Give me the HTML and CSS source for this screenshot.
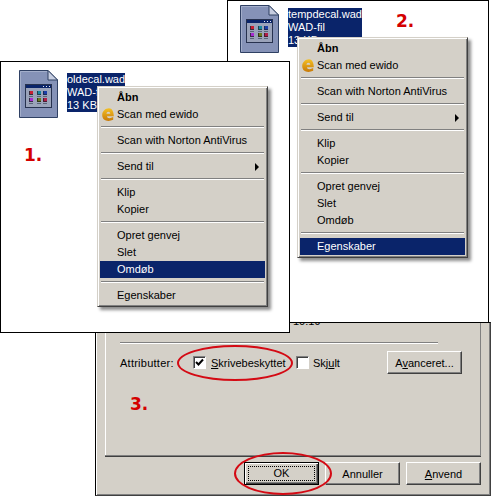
FILE: index.html
```html
<!DOCTYPE html>
<html lang="da">
<head>
    <meta charset="UTF-8">
    <title>Skrivebeskyttet</title>
    <link rel="stylesheet" href="styles.css">
</head>
<body>
    <svg class="defs" width="0" height="0">
        <defs>
            <linearGradient id="ewido-fill" x1="0" y1="0" x2="0" y2="1">
                <stop offset="0" stop-color="#f4c024"/>
                <stop offset="1" stop-color="#c87a08"/>
            </linearGradient>
        </defs>
        <symbol id="wad-icon" viewBox="0 0 39 48">
            <path d="M.5.5H29L38.500 10V47.500H.5Z" fill="#8592b7" stroke="#2f4063"/>
            <path d="M1.500 46.500V1.500H28" fill="none" stroke="#a3aeca"/>
            <path d="M29 .5V10H38.500Z" fill="#c6cde0" stroke="#2f4063"/>
            <rect x="6.500" y="14.500" width="26" height="23" fill="#9aa3ba" stroke="#27324f"/>
            <rect x="7" y="15" width="25" height="3" fill="#0a246a"/>
            <path d="M24 16.500H25M27 16.500H28M30 16.500H31" stroke="#dfe4f2"/>
            <rect x="10" y="21" width="4" height="4" fill="#3a2a3c"/>
            <rect x="18" y="21" width="4" height="4" fill="#20404c"/>
            <rect x="24" y="21" width="4" height="4" fill="#1c2a58"/>
            <rect x="11" y="21" width="3" height="3" fill="#c81e32"/>
            <rect x="19" y="21" width="3" height="3" fill="#1486a0"/>
            <rect x="25" y="21" width="3" height="3" fill="#1c3ea8"/>
            <rect x="10" y="28" width="4" height="4" fill="#3a2a4c"/>
            <rect x="18" y="28" width="4" height="4" fill="#303818"/>
            <rect x="24" y="28" width="4" height="4" fill="#4a1c30"/>
            <rect x="11" y="28" width="3" height="3" fill="#a82cd0"/>
            <rect x="19" y="28" width="3" height="3" fill="#6a7b20"/>
            <rect x="25" y="28" width="3" height="3" fill="#b01c48"/>
            <path d="M10 26.500H14M18 26.500H22M24 26.500H28M10 33.500H14M18 33.500H22M24 33.500H28" stroke="#5a6478"/>
        </symbol>
        <symbol id="ewido-icon" viewBox="0 0 12 13">
            <path d="M11.800 8.200H5C5 10.500 8 10.800 11.200 9V11.800C6 14.200 .2 12.800 .2 7C.2 3 3.500 .2 7 .2C10 .2 11.800 3.500 11.800 8.200ZM8.300 5.800C8.300 3 4.500 3 4.500 5.800Z" fill="url(#ewido-fill)" fill-rule="evenodd"/>
        </symbol>
    </svg>

    <!-- 3. -->
    <section class="dialog">
        <div class="tab">
            <span class="date-cut">10:19</span>
            <hr class="rule">
            <div class="attrs">
                <span class="attrs-label">Attributter:</span>
                <label class="check check-first"><span class="box">
                    <svg viewBox="0 0 9 9" width="9" height="9"><path d="M1 4L3.500 6.500L8 1.500" fill="none" stroke="#000" stroke-width="2"/></svg>
                </span><span><u>S</u>krivebeskyttet</span></label>
                <label class="check check-second"><span class="box"></span><span>Skj<u>u</u>lt</span></label>
                <button class="btn btn-adv">A<u>v</u>anceret...</button>
            </div>
            <strong class="step step-three">3.</strong>
        </div>
        <div class="actions">
            <button class="btn btn-ok"><span>OK</span></button>
            <button class="btn">Annuller</button>
            <button class="btn"><u>A</u>nvend</button>
        </div>
        <i class="ring ring-check"></i>
        <i class="ring ring-ok"></i>
    </section>

    <!-- 2. -->
    <section class="shot shot-two">
        <div class="file">
            <svg class="file-icon"><use href="#wad-icon"/></svg>
            <p class="file-name">tempdecal.wad<br>WAD-fil<br>13 KB</p>
        </div>
        <strong class="step step-two">2.</strong>
        <ul class="menu">
            <li class="bold">Åbn</li>
            <li><svg class="ewido"><use href="#ewido-icon"/></svg>Scan med ewido</li>
            <li class="sep"></li>
            <li>Scan with Norton AntiVirus</li>
            <li class="sep"></li>
            <li class="sub">Send til</li>
            <li class="sep"></li>
            <li>Klip</li>
            <li>Kopier</li>
            <li class="sep"></li>
            <li>Opret genvej</li>
            <li>Slet</li>
            <li>Omdøb</li>
            <li class="sep"></li>
            <li class="active">Egenskaber</li>
        </ul>
    </section>

    <!-- 1. -->
    <section class="shot shot-one">
        <div class="file">
            <svg class="file-icon"><use href="#wad-icon"/></svg>
            <p class="file-name">oldecal.wad<br>WAD-fil<br>13 KB</p>
        </div>
        <strong class="step step-one">1.</strong>
        <ul class="menu">
            <li class="bold">Åbn</li>
            <li><svg class="ewido"><use href="#ewido-icon"/></svg>Scan med ewido</li>
            <li class="sep"></li>
            <li>Scan with Norton AntiVirus</li>
            <li class="sep"></li>
            <li class="sub">Send til</li>
            <li class="sep"></li>
            <li>Klip</li>
            <li>Kopier</li>
            <li class="sep"></li>
            <li>Opret genvej</li>
            <li>Slet</li>
            <li class="active">Omdøb</li>
            <li class="sep"></li>
            <li>Egenskaber</li>
        </ul>
    </section>
</body>
</html>
```

FILE: styles.css
```css
html, body {
    margin: 0;
    height: 100%;
}

body {
    position: relative;
    width: 491px;
    height: 496px;
    overflow: hidden;
    background: #fff;
    font-family: "Liberation Sans", Arial, sans-serif;
    font-size: 11px;
    color: #000;
}

.defs {
    position: absolute;
}

.shot {
    position: absolute;
    box-sizing: border-box;
    background: #fff;
    border: 1px solid #000;
}

.shot-one {
    left: 0;
    top: 61px;
    width: 290px;
    height: 272px;
}

.shot-two {
    left: 227px;
    top: 0;
    width: 262px;
    height: 323px;
}

.file {
    display: flex;
    gap: 9px;
}

.shot-one .file {
    margin: 8px 0 0 18px;
}

.shot-two .file {
    margin: 4px 0 0 12px;
}

.file-icon {
    width: 39px;
    height: 48px;
    flex: none;
}

.file-name {
    margin: 3px 0 0;
    padding: 0;
    background: #0a246a;
    color: #fff;
    line-height: 13px;
    height: 39px;
}

.step {
    position: absolute;
    color: #d40000;
    font-family: "DejaVu Sans", sans-serif;
    font-size: 17px;
    line-height: 18px;
}

.step-one {
    left: 23px;
    top: 84px;
}

.step-two {
    left: 168px;
    top: 11px;
}

.step-three {
    left: 24px;
    top: 72px;
}

.menu {
    position: absolute;
    box-sizing: border-box;
    width: 171px;
    margin: 0;
    padding: 2px;
    list-style: none;
    background: #d4d0c8;
    border: 1px solid;
    border-color: #d4d0c8 #404040 #404040 #d4d0c8;
    box-shadow: inset 1px 1px 0 #fff, inset -1px -1px 0 #808080, 3px 3px 3px rgba(0, 0, 0, 0.45);
}

.shot-one .menu {
    left: 96px;
    top: 24px;
}

.shot-two .menu {
    left: 69px;
    top: 36px;
}

.menu li {
    position: relative;
    height: 17px;
    padding-left: 17px;
    line-height: 17px;
}

.menu .bold {
    font-weight: bold;
}

.menu .sep {
    height: 0;
    margin: 3px 1px 4px;
    padding: 0;
    border-top: 1px solid #808080;
    border-bottom: 1px solid #fff;
}

.menu .active {
    background: #0a246a;
    color: #fff;
}

.menu .sub::after {
    content: "";
    position: absolute;
    right: 6px;
    top: 5px;
    border-left: 4px solid #000;
    border-top: 4px solid transparent;
    border-bottom: 4px solid transparent;
}

.ewido {
    position: absolute;
    left: 2px;
    top: 2px;
    width: 12px;
    height: 13px;
}

.dialog {
    position: absolute;
    left: 95px;
    top: 322px;
    box-sizing: border-box;
    width: 396px;
    height: 174px;
    padding: 0 9px;
    background: #d4d0c8;
    border: 1px solid;
    border-color: #000 #404040 #404040 #000;
    box-shadow: inset 1px 0 0 #fff, inset -1px -1px 0 #808080;
}

.tab {
    position: relative;
    box-sizing: border-box;
    height: 132px;
    padding: 19px 18px 0 14px;
    border: solid #fff;
    border-width: 0 1px;
    border-right-color: #808080;
    box-shadow: 0 1px 0 #808080, 0 2px 0 #404040;
}

.date-cut {
    position: absolute;
    left: 187px;
    top: -8px;
    line-height: 13px;
}

.rule {
    height: 0;
    margin: 0 24px 0 0;
    border: 0;
    border-top: 1px solid #808080;
    border-bottom: 1px solid #fff;
}

.attrs {
    display: flex;
    align-items: center;
    margin-top: 7px;
}

.attrs-label {
    width: 73px;
    letter-spacing: 0.25px;
}

.check {
    display: flex;
    align-items: center;
    gap: 5px;
}

.check-first {
    width: 103px;
}

.check-second {
    gap: 4px;
}

.box {
    display: flex;
    align-items: center;
    justify-content: center;
    box-sizing: border-box;
    width: 13px;
    height: 13px;
    background: #fff;
    border: 1px solid;
    border-color: #808080 #fff #fff #808080;
    box-shadow: inset 1px 1px 0 #404040;
}

.btn {
    box-sizing: border-box;
    width: 75px;
    height: 23px;
    padding: 0;
    font: inherit;
    color: #000;
    background: #d4d0c8;
    border: 1px solid;
    border-color: #fff #404040 #404040 #fff;
    box-shadow: inset -1px -1px 0 #808080;
}

.btn-adv {
    margin-left: auto;
}

.actions {
    display: flex;
    justify-content: flex-end;
    gap: 6px;
    margin-top: 7px;
}

.btn-ok {
    border: 1px solid #000;
    box-shadow: inset 1px 1px 0 #fff, inset -1px -1px 0 #404040, inset -2px -2px 0 #808080;
    padding: 3px;
}

.btn-ok span {
    display: block;
    height: 15px;
    line-height: 13px;
    box-sizing: border-box;
    border: 1px dotted #000;
}

.ring {
    position: absolute;
    box-sizing: border-box;
    border: 2px solid #d40a14;
    border-radius: 50%;
}

.ring-check {
    left: 81px;
    top: 22px;
    width: 116px;
    height: 36px;
}

.ring-ok {
    left: 138px;
    top: 129px;
    width: 98px;
    height: 43px;
}
```
